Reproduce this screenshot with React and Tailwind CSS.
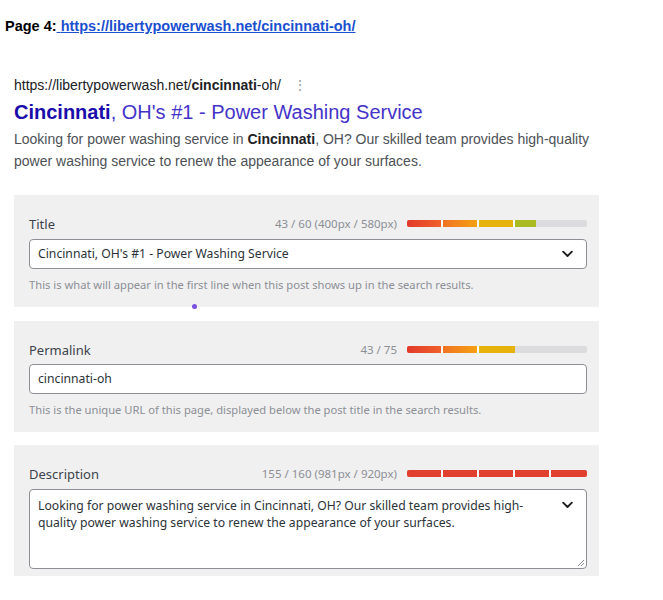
import React from "react";

const arial = { fontFamily: '"Liberation Sans", Arial, sans-serif' };

// segmented length meter on a grey track: fills = list of [colour class, percent of segment]
const Meter = ({ fills }) => (
  <div className="flex h-[7px] w-[180px] overflow-hidden rounded-[2px] bg-[#dcdcde]">
    {fills.map((f, i) => (
      <div key={i} className="h-full w-[36px] shrink-0 border-r-2 border-white last:border-r-0">
        <div className={`h-full ${f[0]}`} style={{ width: `${f[1]}%` }} />
      </div>
    ))}
  </div>
);

const Chevron = () => (
  <svg width="15" height="15" viewBox="0 0 24 24" fill="none" stroke="#1e1e1e" strokeWidth="3" strokeLinecap="round" strokeLinejoin="round">
    <path d="M5 9l7 7 7-7" />
  </svg>
);

const Field = ({ label, counter, fills, children, help, className = "" }) => (
  <div className={`bg-[#f0f0f1] pl-[15px] pr-[12px] pt-[20px] ${className}`}>
    <div className="flex h-[18px] items-center justify-between">
      <span className="text-[13px] leading-[18px] text-[#3c434a]">{label}</span>
      <div className="flex items-center gap-[10px]">
        <span className="text-[11.5px] text-[#8c8f94]">{counter}</span>
        <Meter fills={fills} />
      </div>
    </div>
    {children}
    {help && <p className="mt-[8px] text-[11.2px] leading-[15px] text-[#8c8f94]">{help}</p>}
  </div>
);

const red = ["bg-gradient-to-r from-[#e2382a] to-[#f0602a]", 100];
const orange = ["bg-gradient-to-r from-[#f07222] to-[#f5a010]", 100];
const yellow = ["bg-[#e6b20c]", 100];

export default function App() {
  return (
    <div className="min-h-screen bg-white" style={{ fontFamily: '"Noto Sans", "Open Sans", sans-serif' }}>
      <div className="pl-[5px] pt-[16px] text-[14.5px] font-bold text-black" style={arial}>
        Page 4:
        <a href="#" className="text-[#1a4fcf] underline">
          {" "}https://libertypowerwash.net/cincinnati-oh/
        </a>
      </div>

      {/* search result preview */}
      <div className="pl-[14px] pt-[38px]" style={arial}>
        <div className="flex items-center text-[14px] leading-[18px] text-[#202124]">
          <span>
            https://libertypowerwash.net/<b>cincinnati</b>-oh/
          </span>
          <span className="ml-[12px] text-[14px] leading-none text-[#9aa0a6]">⋮</span>
        </div>
        <div className="mt-[5px] text-[20px] leading-[26px] text-[#4433c8]">
          <b className="text-[#1a0dab]">Cincinnati</b>, OH's #1 - Power Washing Service
        </div>
        <p className="mt-[3px] w-[590px] text-[14px] leading-[22px] text-[#4d5156]">
          Looking for power washing service in <b className="text-[#202124]">Cincinnati</b>, OH? Our skilled team provides high-quality power washing service to renew the appearance of your surfaces.
        </p>
      </div>

      <div className="ml-[14px] mt-[23px] w-[585px]">
        <Field
          className="pb-[15px]"
          label="Title"
          counter="43 / 60 (400px / 580px)"
          fills={[red, orange, yellow, ["bg-[#aabb22]", 58]]}
          help="This is what will appear in the first line when this post shows up in the search results."
        >
          <div className="mt-[6px] flex h-[30px] items-center justify-between rounded-[4px] border border-[#8c8f94] bg-white pl-[8px] pr-[11px] text-[12.2px] text-[#2c3338]">
            <span>Cincinnati, OH's #1 - Power Washing Service</span>
            <Chevron />
          </div>
        </Field>

        <div className="relative h-[14px]">
          <span className="absolute left-[178px] top-[-3px] h-[5px] w-[5px] rounded-full bg-[#7b4fe0]" />
        </div>

        <Field
          className="pb-[15px]"
          label="Permalink"
          counter="43 / 75"
          fills={[red, orange, yellow]}
          help="This is the unique URL of this page, displayed below the post title in the search results."
        >
          <div className="mt-[5px] flex h-[30px] items-center rounded-[4px] border border-[#8c8f94] bg-white pl-[8px] text-[12.2px] text-[#2c3338]">
            cincinnati-oh
          </div>
        </Field>

        <Field
          className="mt-[13px] pb-[7px]"
          label="Description"
          counter="155 / 160 (981px / 920px)"
          fills={[0, 1, 2, 3, 4].map(() => ["bg-[#e2402e]", 100])}
        >
          <div className="relative mt-[6px] h-[80px] rounded-[4px] border border-[#8c8f94] bg-white pl-[8px] pr-[40px] pt-[7px] text-[12.2px] leading-[17px] text-[#2c3338]">
            Looking for power washing service in Cincinnati, OH? Our skilled team provides high-&#8203;quality power washing service to renew the appearance of your surfaces.
            <span className="absolute right-[11px] top-[7px]">
              <Chevron />
            </span>
            <svg className="absolute bottom-[1px] right-[1px]" width="8" height="8" viewBox="0 0 8 8" stroke="#8c8f94" strokeWidth="1">
              <path d="M7 1L1 7M7 4L4 7" />
            </svg>
          </div>
        </Field>
      </div>
    </div>
  );
}
